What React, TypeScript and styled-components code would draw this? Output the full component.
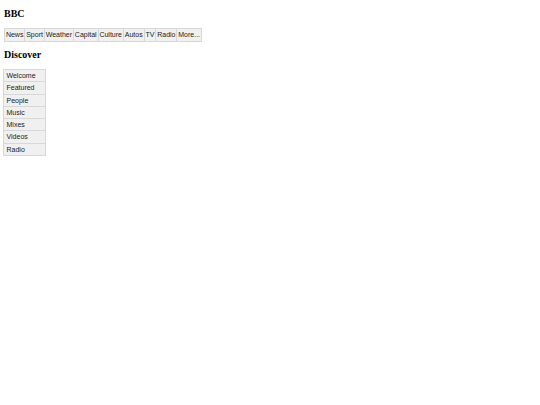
import React from "react";
import styled, { createGlobalStyle } from "styled-components";

const Global = createGlobalStyle`
  html, body { margin: 0; padding: 0; background: #fff; }
  body { font-family: "Liberation Serif", "Times New Roman", serif; }
`;

const Page = styled.div`
  padding: 4px 3px;
  display: flex;
  flex-direction: column;
  align-items: flex-start;
`;

const Heading = styled.h1<{ $top?: number }>`
  margin: ${(p) => p.$top ?? 4}px 0 0 1px;
  font-family: "Liberation Serif", "Times New Roman", serif;
  font-weight: bold;
  font-size: 10px;
  line-height: 12px;
  color: #000;
`;

const NavBar = styled.ul`
  list-style: none;
  margin: 8px 0 7px 1px;
  padding: 0;
  display: flex;
  border-left: 1px solid #d8d8d8;
`;

const NavItem = styled.li`
  font-family: "Liberation Sans", Arial, sans-serif;
  font-size: 7px;
  line-height: 8px;
  color: #222;
  background: #f0f0f0;
  border: 1px solid #d8d8d8;
  border-left: none;
  padding: 2px 0.9px;
`;

const SideList = styled.ul`
  list-style: none;
  margin: 8px 0 0 0;
  padding: 0;
  width: 43px;
  display: flex;
  flex-direction: column;
  border-top: 1px solid #d8d8d8;
`;

const SideItem = styled.li`
  font-family: "Liberation Sans", Arial, sans-serif;
  font-size: 7px;
  line-height: 8px;
  color: #222;
  background: #f0f0f0;
  border: 1px solid #d8d8d8;
  border-top: none;
  padding: 2px 2.5px 1.3px;
`;

const nav = ["News", "Sport", "Weather", "Capital", "Culture", "Autos", "TV", "Radio", "More..."];
const discover = ["Welcome", "Featured", "People", "Music", "Mixes", "Videos", "Radio"];

export default function App() {
  return (
    <Page>
      <Global />
      <Heading>BBC</Heading>
      <NavBar>
        {nav.map((n) => (
          <NavItem key={n}>{n}</NavItem>
        ))}
      </NavBar>
      <Heading as="h2" $top={0}>Discover</Heading>
      <SideList>
        {discover.map((d) => (
          <SideItem key={d}>{d}</SideItem>
        ))}
      </SideList>
    </Page>
  );
}
